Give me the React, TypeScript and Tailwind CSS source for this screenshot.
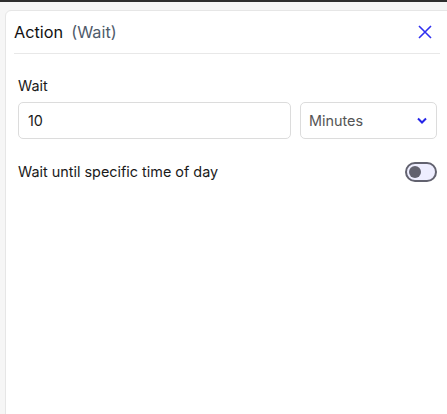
export default function App() {
  return (
    <div className="h-[414px] w-[447px] overflow-hidden bg-[#f6f6f6] font-['Inter',sans-serif]">
      <div className="h-[2px] bg-[#2e2e2e]" />
      <div className="ml-[5px] mt-[8px] h-[420px] w-[444px] rounded-tl-[6px] border border-[#e6e6e6] bg-white">
        <div className="mx-2 flex h-[43px] items-center justify-between border-b border-[#e8e8e8]">
          <div className="flex items-baseline gap-2 text-[16.3px]">
            <span className="text-[#111111]">Action</span>
            <span className="text-[#4f5b6b]">(Wait)</span>
          </div>
          <svg
            width="14"
            height="14"
            viewBox="0 0 14 14"
            className="mr-[8px]"
            stroke="#2f2ff0"
            strokeWidth="1.6"
            fill="none"
          >
            <path d="M1 1 L13 13 M13 1 L1 13" />
          </svg>
        </div>
        <div className="pl-3 pr-[11px] pt-[22px]">
          <div className="text-[14.4px] leading-5 text-[#1a1a1a]">Wait</div>
          <div className="mt-[6px] flex gap-[9px]">
            <div className="flex h-[37px] flex-1 items-center rounded-[5px] border border-[#dcdcdc] px-[9px] text-[14.4px] text-[#1a1a1a]">
              10
            </div>
            <div className="flex h-[37px] w-[137px] items-center justify-between rounded-[5px] border border-[#dcdcdc] pl-[8px] pr-[9px] text-[14.4px] text-[#555555]">
              <span>Minutes</span>
              <svg
                width="10"
                height="7"
                viewBox="0 0 10 7"
                stroke="#2525e8"
                strokeWidth="2"
                fill="none"
              >
                <path d="M1 1.5 L5 5.5 L9 1.5" />
              </svg>
            </div>
          </div>
          <div className="mt-[22px] flex items-center justify-between">
            <span className="text-[14.4px] text-[#1a1a1a]">
              Wait until specific time of day
            </span>
            <div className="flex h-[20px] w-[32px] items-center rounded-full border-2 border-[#62626f] bg-[#eeeeff] pl-[2px]">
              <div className="h-[12px] w-[12px] rounded-full bg-[#62626f]" />
            </div>
          </div>
        </div>
      </div>
    </div>
  )
}
